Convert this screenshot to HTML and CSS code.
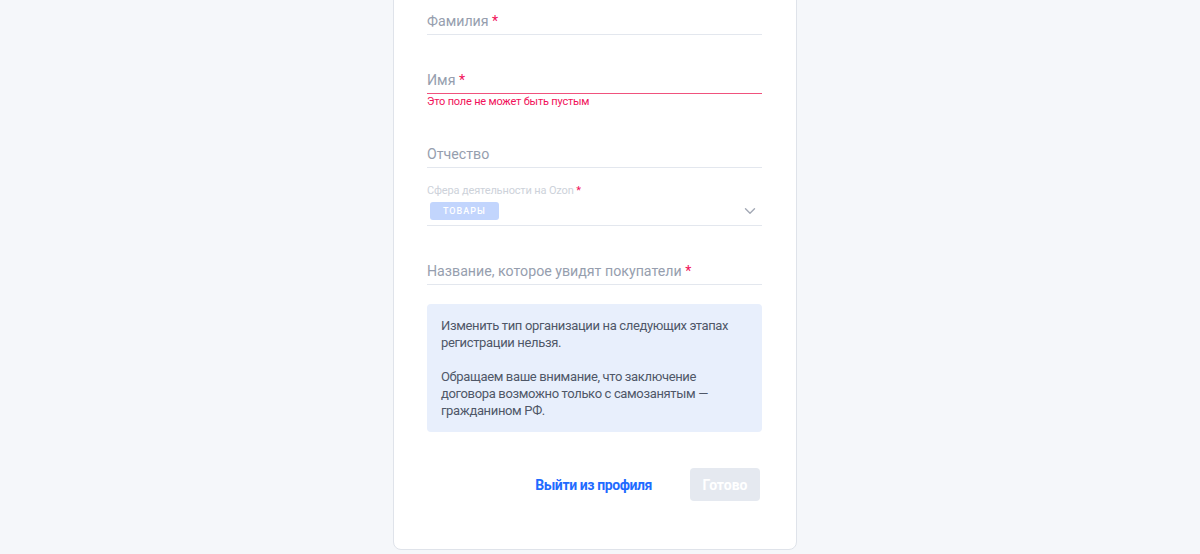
FILE: index.html
```html
<!DOCTYPE html>
<html lang="ru">
<head>
<meta charset="utf-8">
<title>Регистрация</title>
<link rel="stylesheet" href="styles.css">
</head>
<body>
<div class="page">
  <div class="card">
    <div class="field">
      <div class="field-box"><span class="label">Фамилия <span class="req">*</span></span></div>
    </div>
    <div class="field field-error">
      <div class="field-box"><span class="label">Имя <span class="req">*</span></span></div>
      <div class="error">Это поле не может быть пустым</div>
    </div>
    <div class="field">
      <div class="field-box"><span class="label">Отчество</span></div>
    </div>
    <div class="field select">
      <div class="select-label">Сфера деятельности на Ozon <span class="req">*</span></div>
      <div class="select-box">
        <span class="chip">ТОВАРЫ</span>
        <svg class="chevron" width="12" height="8" viewBox="0 0 12 8"><path d="M1.5 1.8 L6 6.2 L10.5 1.8" fill="none" stroke="#a3a9b5" stroke-width="1.4" stroke-linecap="round" stroke-linejoin="round"/></svg>
      </div>
    </div>
    <div class="field">
      <div class="field-box"><span class="label">Название, которое увидят покупатели <span class="req">*</span></span></div>
    </div>
    <div class="info">
      <p>Изменить тип организации на следующих этапах регистрации нельзя.</p>
      <p>Обращаем ваше внимание, что заключение договора возможно только с самозанятым — гражданином РФ.</p>
    </div>
    <div class="actions">
      <button class="btn-link" type="button">Выйти из профиля</button>
      <button class="btn-primary" type="button" disabled>Готово</button>
    </div>
  </div>
</div>
</body>
</html>
```
FILE: styles.css
```css
* { box-sizing: border-box; }
html, body { margin: 0; padding: 0; }
body {
  background: #f5f7fa;
  font-family: Roboto, "Noto Sans", "Liberation Sans", sans-serif;
  height: 554px;
  overflow: hidden;
}
.page {
  display: flex;
  justify-content: center;
  padding-right: 10px;
}
.card {
  width: 404px;
  margin-top: -41px;
  background: #fff;
  border: 1px solid #dfe3ea;
  border-radius: 8px;
  padding: 40px 34px 48px 33px;
  display: flex;
  flex-direction: column;
}
.field { margin-bottom: 24px; }
.field-box {
  height: 35px;
  padding: 11px 0 3px;
  border-bottom: 1px solid #e3e7ee;
  display: flex;
  align-items: center;
}
.label {
  font-size: 14.2px;
  line-height: 20px;
  color: #969eae;
}
.req { color: #f1115a; }
.field-error { margin-bottom: 23px; }
.field-error .field-box { border-bottom-color: #f0527d; }
.error {
  font-size: 11px;
  line-height: 16px;
  letter-spacing: -0.2px;
  color: #f1115a;
}
.select { margin-top: -8px; }
.select-label {
  font-size: 11px;
  line-height: 14px;
  letter-spacing: -0.15px;
  color: #cdd2da;
}
.select-box {
  height: 28px;
  padding: 4px 4px 5px 3px;
  border-bottom: 1px solid #e3e7ee;
  display: flex;
  align-items: center;
  justify-content: space-between;
}
.chip {
  width: 69px;
  height: 18px;
  background: #c2d5fd;
  border-radius: 3px;
  color: #fff;
  font-size: 9px;
  font-weight: 500;
  letter-spacing: 1px;
  display: flex;
  align-items: center;
  padding-left: 13px;
}
.chevron { margin-right: 2px; }
.info {
  margin-top: -5px;
  background: #e8effc;
  border-radius: 4px;
  padding: 13px 14px 13px 14px;
  font-size: 13px;
  line-height: 17px;
  letter-spacing: -0.35px;
  color: #4f5768;
}
.info p { margin: 0; }
.info p + p { margin-top: 17px; }
.actions {
  margin-top: 36px;
  display: flex;
  justify-content: flex-end;
  align-items: center;
  padding-right: 2px;
}
.btn-link {
  background: none;
  border: 0;
  font-family: inherit;
  font-size: 14px;
  font-weight: 700;
  letter-spacing: -0.4px;
  color: #1f6bff;
  padding: 0;
  margin-right: 38px;
  cursor: pointer;
}
.btn-primary {
  width: 70px;
  height: 33px;
  background: #e5e9f0;
  border: 0;
  border-radius: 4px;
  font-family: inherit;
  font-size: 14px;
  font-weight: 700;
  color: #fff;
}
```
